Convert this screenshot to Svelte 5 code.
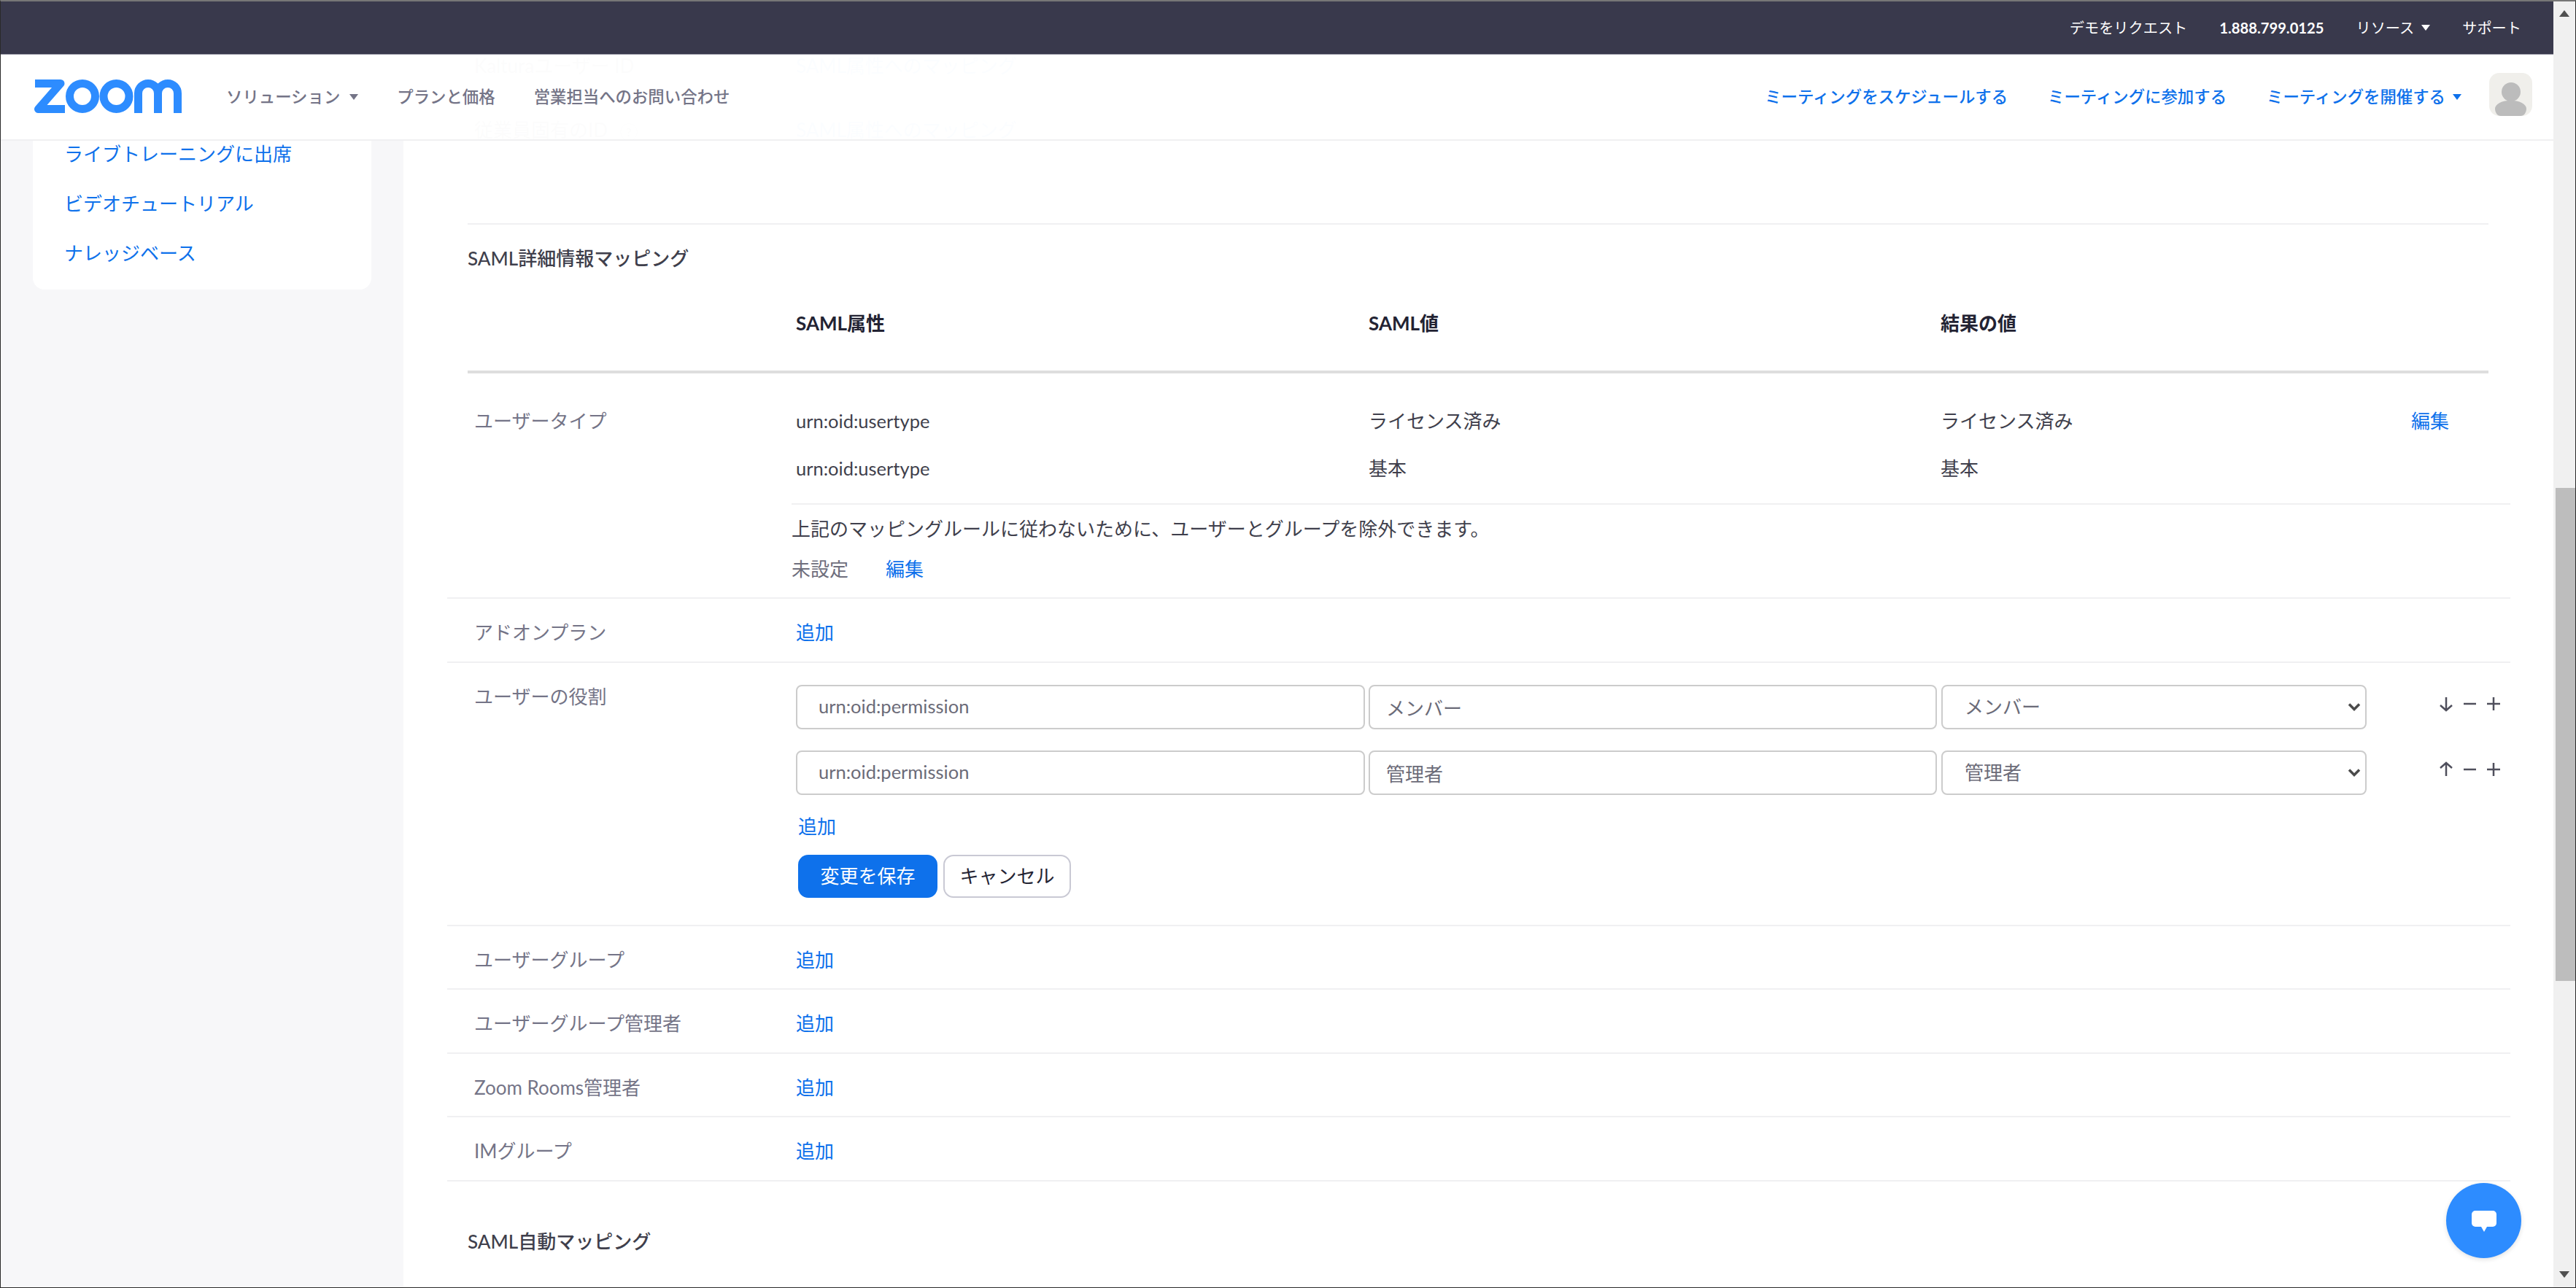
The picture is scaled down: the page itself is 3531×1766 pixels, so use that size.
<script>
  const simple = ['ユーザーグループ', 'ユーザーグループ管理者', 'Zoom Rooms管理者', 'IMグループ'];
</script>

<div class="frame">
  <div class="page">
    <div class="topbar">
      <span>デモをリクエスト</span>
      <span class="phone">1.888.799.0125</span>
      <span class="with-caret">リソース<i class="caret white"></i></span>
      <span>サポート</span>
    </div>
    <div class="viewport">
      <header class="header">
        <svg class="logo" viewBox="0 0 203 46" aria-label="zoom">
          <g fill="none" stroke="#2d8cff" stroke-width="11">
            <path d="M2 5.5H37L6.500 40.500H43" stroke-linejoin="round" />
            <circle cx="67" cy="23" r="17.500" />
            <circle cx="113.500" cy="23" r="17.500" />
            <path d="M143.500 46V19a13.500 13.500 0 0 1 27 0V46M170.500 19a13.500 13.500 0 0 1 27 0V46" />
          </g>
        </svg>
        <nav class="nav-left">
          <span class="with-caret">ソリューション<i class="caret gray"></i></span>
          <span>プランと価格</span>
          <span>営業担当へのお問い合わせ</span>
        </nav>
        <nav class="nav-right">
          <span>ミーティングをスケジュールする</span>
          <span>ミーティングに参加する</span>
          <span class="with-caret">ミーティングを開催する<i class="caret blue"></i></span>
        </nav>
        <svg class="avatar" viewBox="0 0 59 59">
          <path d="M8 49a21 11 0 0 1 43 0c0 5-3 10-8 10H16c-5 0-8-5-8-10z" fill="#bcbcbc" />
          <circle cx="30" cy="26" r="13" fill="#bcbcbc" />
        </svg>
      </header>

      <div class="layout">
        <aside class="sidebar">
          <div class="card">
            <a href="#a">ライブトレーニングに出席</a>
            <a href="#a">ビデオチュートリアル</a>
            <a href="#a">ナレッジベース</a>
          </div>
        </aside>

        <main class="main">
          <div class="ghosts">
            <div class="ghost"><span>Kalturaユーザー ID</span><a href="#a">SAML属性へのマッピング</a></div>
            <div class="ghost"><span>従業員固有のID <i class="qm">?</i></span><a href="#a">SAML属性へのマッピング</a></div>
          </div>

          <section class="mapping-head">
            <h3>SAML詳細情報マッピング</h3>
            <div class="cols">
              <b>SAML属性</b><b>SAML値</b><b>結果の値</b>
            </div>
          </section>

          <div class="row type-row">
            <div class="label">ユーザータイプ</div>
            <div class="content">
              <div class="vals">
                <span class="latin">urn:oid:usertype</span><span>ライセンス済み</span><span>ライセンス済み</span><a href="#a">編集</a>
                <span class="latin">urn:oid:usertype</span><span>基本</span><span>基本</span>
              </div>
              <p class="note">上記のマッピングルールに従わないために、ユーザーとグループを除外できます。</p>
              <div class="unset"><span>未設定</span><a href="#a">編集</a></div>
            </div>
          </div>

          <div class="row simple">
            <div class="label">アドオンプラン</div>
            <a class="add" href="#a">追加</a>
          </div>

          <div class="row role-row">
            <div class="label">ユーザーの役割</div>
            <div class="role">
              <div class="mapline">
                <input class="attr" value="urn:oid:permission" />
                <input class="val" value="メンバー" />
                <div class="sel"><select><option>メンバー</option></select><svg viewBox="0 0 18 11"><path d="M2 1.5l7 7 7-7" /></svg></div>
                <svg class="acts" viewBox="0 0 100 30">
                  <path d="M13 6V24M5 17l8 7 8-7M37 15H54M69 15H87M78 6V24" />
                </svg>
              </div>
              <div class="mapline">
                <input class="attr" value="urn:oid:permission" />
                <input class="val" value="管理者" />
                <div class="sel"><select><option>管理者</option></select><svg viewBox="0 0 18 11"><path d="M2 1.5l7 7 7-7" /></svg></div>
                <svg class="acts" viewBox="0 0 100 30">
                  <path d="M13 24V6M5 13l8-7 8 7M37 15H54M69 15H87M78 6V24" />
                </svg>
              </div>
              <a class="add add-role" href="#a">追加</a>
              <div class="btns">
                <button class="save">変更を保存</button>
                <button class="cancel">キャンセル</button>
              </div>
            </div>
          </div>

          {#each simple as s}
            <div class="row simple">
              <div class="label">{s}</div>
              <a class="add" href="#a">追加</a>
            </div>
          {/each}

          <h3 class="auto">SAML自動マッピング</h3>
        </main>
      </div>

      <button class="chat" aria-label="chat">
        <svg viewBox="0 0 36 32"><path d="M6 1H30a5 5 0 0 1 5 5V18a5 5 0 0 1-5 5H22l-4 7-4-7H6a5 5 0 0 1-5-5V6a5 5 0 0 1 5-5z" fill="#fff" /></svg>
      </button>
    </div>
  </div>
  <div class="scrollbar">
    <i class="tri up"></i>
    <div class="thumb"></div>
    <i class="tri down"></i>
  </div>
</div>

<style>
  :global(body) { margin: 0; overflow: hidden; background: #fff; }
  * { box-sizing: border-box; }
  .frame {
    width: 3531px; height: 1766px; display: flex; overflow: hidden;
    border: 1px solid #2a2a2a; border-top: 2px solid #777; background: #fff;
    font-family: Lato, "Noto Sans CJK JP", sans-serif; font-size: 26px; line-height: 40px; color: #3f3f4c;
  }
  .latin { font-size: 25.5px; }
  .page { width: 3499px; display: flex; flex-direction: column; }
  .topbar {
    height: 73px; background: #39394c; color: #fff; font-size: 20.2px;
    display: flex; align-items: center; justify-content: flex-end; gap: 44px; padding-right: 44px; flex: none;
    border-bottom: 1px solid #9a9aa6;
  }
  .phone { font-weight: 700; font-size: 20.2px; }
  .with-caret { display: inline-flex; align-items: center; gap: 10px; }
  .caret { width: 0; height: 0; border: 6.5px solid transparent; border-bottom: 0; border-top-width: 8px; display: block; }
  .caret.white { border-top-color: #fff; }
  .caret.gray { border-top-color: #747487; margin-left: 3px; }
  .caret.blue { border-top-color: #0e71eb; }
  .viewport { flex: 1; position: relative; overflow: hidden; min-height: 0; }
  .header {
    position: absolute; top: 0; left: 0; right: 0; height: 118px; z-index: 2;
    background: rgba(255,255,255,.985); border-bottom: 2px solid #f0f0f2;
    display: flex; align-items: center; padding: 0 29px 0 45px; font-size: 22.4px;
  }
  .logo { width: 203px; height: 46px; flex: none; margin-top: -2px; }
  .nav-left { display: flex; gap: 53px; color: #747487; margin-left: 61px; font-weight: 500; }
  .nav-right { display: flex; gap: 55px; color: #0e71eb; margin-left: auto; font-weight: 500; }
  .avatar { width: 59px; height: 59px; background: #f0efeb; border-radius: 14px; margin-left: 38px; flex: none; margin-top: -7px; }

  .layout { display: flex; min-height: 100%; }
  .sidebar { width: 552px; flex: none; background: #f7f7f9; padding: 0 44px; }
  .card { background: #fff; border-radius: 0 0 16px 16px; padding: 116px 0 30px 43px; display: flex; flex-direction: column; gap: 28px; }
  a { color: #0e71eb; text-decoration: none; }
  .main { flex: 1; min-width: 0; padding: 0 59px 0 60px; background: #fff; }
  .ghosts { margin-top: -29px; height: 260px; }
  .ghost { height: 88px; padding: 24px 0 0 37px; display: flex; color: #3f3f4c; }
  .ghost span:first-child { width: 441px; }
  .qm { display: inline-block; width: 24px; height: 24px; line-height: 22px; border: 1px solid #747487; border-radius: 50%; font-size: 16px; font-style: normal; text-align: center; margin-left: 10px; vertical-align: 1px; }

  .mapping-head { margin: 0 30px 0 28px; border-top: 2px solid #f0f0f2; border-bottom: 4px solid #dedede; padding: 26px 0 45px; }
  h3 { margin: 0; font-weight: 500; font-size: 26px; line-height: 40px; color: #3f3f4c; }
  .cols { display: grid; grid-template-columns: 785px 784px 1fr; padding: 49px 0 0 450px; }
  .cols b { font-weight: 700; color: #232333; }

  .row { display: flex; border-bottom: 2px solid #f0f0f2; }
  .label { width: 478px; flex: none; padding-left: 37px; color: #747487; }
  .simple { padding: 26px 0 19.5px; }
  .type-row { padding: 45px 0 19px; }
  .type-row .label { width: 472px; }
  .content { flex: 1; }
  .vals { display: grid; grid-template-columns: 785px 784px 645px 1fr; row-gap: 25px; padding: 0 0 28px 6px; border-bottom: 2px solid #f0f0f2; }
  .note { margin: 13px 0 15px; }
  .unset { display: flex; gap: 51px; }
  .unset span { color: #6e6e7c; }

  .role-row { padding: 26px 0 37px; }
  .role { flex: 1; padding-top: 4px; }
  .mapline { display: flex; height: 61px; margin-bottom: 29px; }
  input, select {
    height: 61px; border: 2px solid #ccc; border-radius: 8px; background: #fff; color: #6b6b78;
    font: inherit; outline: none;
  }
  .attr { width: 780px; padding: 0 0 2px 29px; font-size: 25.5px; }
  .val { width: 779px; padding: 0 0 0 22px; margin-left: 5px; }
  .sel { width: 583px; margin-left: 6px; position: relative; flex: none; height: 61px; }
  select { width: 100%; appearance: none; padding: 0 0 0 30px; }
  .sel svg { position: absolute; right: 8px; top: 25px; width: 18px; height: 11px; fill: none; stroke: #4a4a4a; stroke-width: 3.5; pointer-events: none; }
  .acts { width: 100px; height: 30px; margin: 11px 0 0 96px; fill: none; stroke: #4f4f5c; stroke-width: 2.5; flex: none; }
  .add-role { display: block; margin: -6px 0 19px 3px; }
  .btns { display: flex; gap: 8px; margin-left: 3px; }
  button { font: inherit; }
  .save { width: 191px; height: 59px; background: #0e71eb; color: #fff; border: 0; border-radius: 14px; padding: 0; }
  .cancel { width: 175px; height: 59px; background: #fff; color: #232333; border: 2px solid #c9c9d4; border-radius: 14px; padding: 0; }
  .auto { margin: 62px 0 0 28px; }

  .chat {
    position: absolute; z-index: 3; left: 3352px; top: 1547px; width: 103px; height: 103px; border-radius: 50%;
    background: #2d8cff; border: 0; padding: 0; display: flex; align-items: center; justify-content: center;
    box-shadow: 0 2px 6px rgba(0,0,0,.12);
  }
  .chat svg { width: 36px; height: 32px; margin-top: 2px; }

  .scrollbar { width: 30px; background: #f0f0f0; display: flex; flex-direction: column; align-items: center; padding-top: 12px; }
  .tri { width: 0; height: 0; display: block; border: 7px solid transparent; }
  .tri.up { border-top: 0; border-bottom: 9px solid #505050; }
  .tri.down { border-bottom: 0; border-top: 9px solid #505050; }
  .thumb { width: 27px; align-self: flex-end; height: 676px; background: #bdbdbd; margin: 646px 0 398px; }
</style>
